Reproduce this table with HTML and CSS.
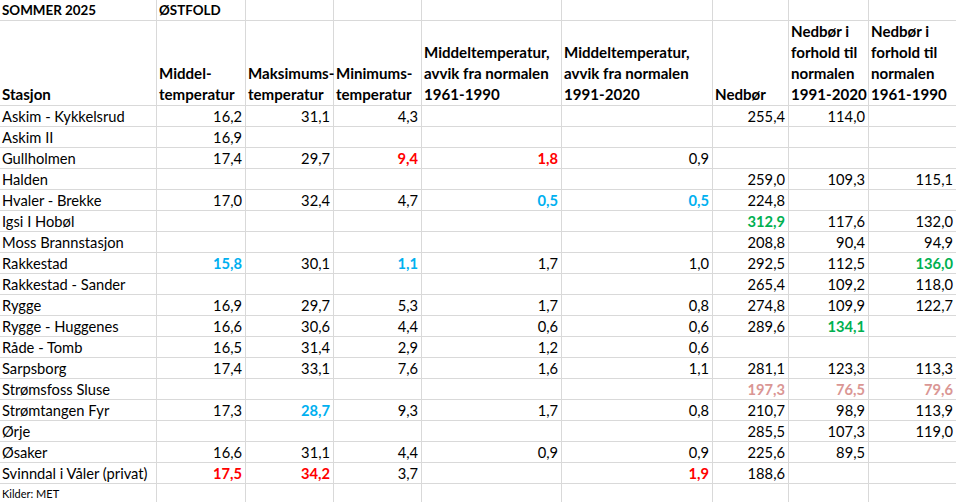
FILE: index.html
```html
<!DOCTYPE html>
<html>
<head>
<meta charset="utf-8">
<link rel="stylesheet" href="styles.css">
</head>
<body>
<table class="sheet">
  <colgroup>
    <col class="c-a"><col class="c-b"><col class="c-c"><col class="c-d"><col class="c-e"><col class="c-f"><col class="c-g"><col class="c-h"><col class="c-i">
  </colgroup>
  <tbody>
    <tr class="row-title">
      <td class="bold">SOMMER 2025</td><td class="bold">ØSTFOLD</td><td></td><td></td><td></td><td></td><td></td><td></td><td></td>
    </tr>
    <tr class="row-head">
      <td>Stasjon</td>
      <td>Middel-<br>temperatur</td>
      <td>Maksimums-<br>temperatur</td>
      <td>Minimums-<br>temperatur</td>
      <td>Middeltemperatur,<br>avvik fra normalen<br>1961-1990</td>
      <td>Middeltemperatur,<br>avvik fra normalen<br>1991-2020</td>
      <td>Nedbør</td>
      <td>Nedbør i<br>forhold til<br>normalen<br>1991-2020</td>
      <td>Nedbør i<br>forhold til<br>normalen<br>1961-1990</td>
    </tr>
    <tr><td>Askim - Kykkelsrud</td><td class="n">16,2</td><td class="n">31,1</td><td class="n">4,3</td><td></td><td></td><td class="n">255,4</td><td class="n">114,0</td><td></td></tr>
    <tr><td>Askim II</td><td class="n">16,9</td><td></td><td></td><td></td><td></td><td></td><td></td><td></td></tr>
    <tr><td>Gullholmen</td><td class="n">17,4</td><td class="n">29,7</td><td class="n red">9,4</td><td class="n red">1,8</td><td class="n">0,9</td><td></td><td></td><td></td></tr>
    <tr><td>Halden</td><td></td><td></td><td></td><td></td><td></td><td class="n">259,0</td><td class="n">109,3</td><td class="n">115,1</td></tr>
    <tr><td>Hvaler - Brekke</td><td class="n">17,0</td><td class="n">32,4</td><td class="n">4,7</td><td class="n blue">0,5</td><td class="n blue">0,5</td><td class="n">224,8</td><td></td><td></td></tr>
    <tr><td>Igsi I Hobøl</td><td></td><td></td><td></td><td></td><td></td><td class="n green">312,9</td><td class="n">117,6</td><td class="n">132,0</td></tr>
    <tr><td>Moss Brannstasjon</td><td></td><td></td><td></td><td></td><td></td><td class="n">208,8</td><td class="n">90,4</td><td class="n">94,9</td></tr>
    <tr><td>Rakkestad</td><td class="n blue">15,8</td><td class="n">30,1</td><td class="n blue">1,1</td><td class="n">1,7</td><td class="n">1,0</td><td class="n">292,5</td><td class="n">112,5</td><td class="n green">136,0</td></tr>
    <tr><td>Rakkestad - Sander</td><td></td><td></td><td></td><td></td><td></td><td class="n">265,4</td><td class="n">109,2</td><td class="n">118,0</td></tr>
    <tr><td>Rygge</td><td class="n">16,9</td><td class="n">29,7</td><td class="n">5,3</td><td class="n">1,7</td><td class="n">0,8</td><td class="n">274,8</td><td class="n">109,9</td><td class="n">122,7</td></tr>
    <tr><td>Rygge - Huggenes</td><td class="n">16,6</td><td class="n">30,6</td><td class="n">4,4</td><td class="n">0,6</td><td class="n">0,6</td><td class="n">289,6</td><td class="n green">134,1</td><td></td></tr>
    <tr><td>Råde - Tomb</td><td class="n">16,5</td><td class="n">31,4</td><td class="n">2,9</td><td class="n">1,2</td><td class="n">0,6</td><td></td><td></td><td></td></tr>
    <tr><td>Sarpsborg</td><td class="n">17,4</td><td class="n">33,1</td><td class="n">7,6</td><td class="n">1,6</td><td class="n">1,1</td><td class="n">281,1</td><td class="n">123,3</td><td class="n">113,3</td></tr>
    <tr><td>Strømsfoss Sluse</td><td></td><td></td><td></td><td></td><td></td><td class="n pink">197,3</td><td class="n pink">76,5</td><td class="n pink">79,6</td></tr>
    <tr><td>Strømtangen Fyr</td><td class="n">17,3</td><td class="n blue">28,7</td><td class="n">9,3</td><td class="n">1,7</td><td class="n">0,8</td><td class="n">210,7</td><td class="n">98,9</td><td class="n">113,9</td></tr>
    <tr><td>Ørje</td><td></td><td></td><td></td><td></td><td></td><td class="n">285,5</td><td class="n">107,3</td><td class="n">119,0</td></tr>
    <tr><td>Øsaker</td><td class="n">16,6</td><td class="n">31,1</td><td class="n">4,4</td><td class="n">0,9</td><td class="n">0,9</td><td class="n">225,6</td><td class="n">89,5</td><td></td></tr>
    <tr><td>Svinndal i Våler (privat)</td><td class="n red">17,5</td><td class="n red">34,2</td><td class="n">3,7</td><td></td><td class="n red">1,9</td><td class="n">188,6</td><td></td><td></td></tr>
    <tr class="row-note"><td class="note">Kilder: MET</td><td></td><td></td><td></td><td></td><td></td><td></td><td></td><td></td></tr>
  </tbody>
</table>
</body>
</html>
```
FILE: styles.css
```css
html, body {
  margin: 0;
  padding: 0;
  background: #ffffff;
  overflow: hidden;
}
.sheet {
  table-layout: fixed;
  border-collapse: separate;
  border-spacing: 0;
  width: 957px;
  font-family: Lato, "Liberation Sans", sans-serif;
  font-size: 14.7px;
  color: #000000;
}
.c-a { width: 157px; }
.c-b { width: 89px; }
.c-c { width: 88px; }
.c-d { width: 88px; }
.c-e { width: 140px; }
.c-f { width: 151px; }
.c-g { width: 76px; }
.c-h { width: 80px; }
.c-i { width: 88px; }
.sheet td {
  padding: 0 3px 0 2px;
  border-right: 1px solid #d9d9d9;
  border-bottom: 1px solid #d9d9d9;
  white-space: nowrap;
  overflow: visible;
  vertical-align: bottom;
  line-height: 20px;
  box-sizing: border-box;
  height: 21px;
}
.row-title td {
  height: 21px;
  font-size: 13.4px;
}
.row-head td {
  height: 84px;
  font-weight: bold;
  font-size: 15.1px;
  line-height: 21px;
  padding-bottom: 0;
}
.bold { font-weight: bold; }
.n { text-align: right; }
.red { color: #ff0000; font-weight: bold; }
.blue { color: #00b0f0; font-weight: bold; }
.green { color: #00b050; font-weight: bold; }
.pink { color: #da9694; font-weight: bold; }
.row-note td { height: 21px; }
.note { font-size: 11px; }
```
